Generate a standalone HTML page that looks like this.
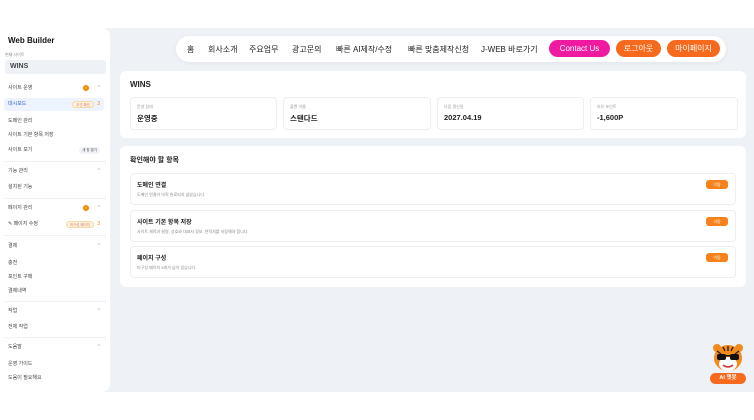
<!DOCTYPE html><html><head><meta charset="utf-8"><style>
*{box-sizing:border-box;margin:0;padding:0}
body{width:754px;height:420px;background:#fff;font-family:"Liberation Sans","Noto Sans CJK KR",sans-serif;position:relative;overflow:hidden;color:#222}
.bg{position:absolute;left:0;top:28px;width:754px;height:364px;background:#eef1f6}
.side{position:absolute;left:0;top:28px;width:110px;height:364px;background:#fff;border-radius:0 8px 8px 0;overflow:hidden;font-size:5px;color:#444}
.side .t{position:absolute;left:8px;top:8px;font-size:8px;font-weight:bold;color:#111}
.row{position:absolute;left:8px;right:6px;height:10px;line-height:10px}
.pill{position:absolute;right:10px;top:2px;height:7px;line-height:7px;padding:0 3px;border-radius:4px;font-size:3.5px}
.sep{position:absolute;left:4px;right:4px;height:1px;background:#f0f2f5}
.dot{position:absolute;right:15px;top:2px;width:6px;height:6px;border-radius:50%;background:#f08a00;color:#fff;font-size:4px;text-align:center;line-height:6px;font-weight:bold}
.car{position:absolute;right:4px;top:0;color:#aaa}
.nav{position:absolute;left:176px;top:36px;width:550px;height:26px;background:#fff;border-radius:13px;box-shadow:0 1px 4px rgba(0,0,0,.06);font-size:8px;color:#222}
.nav span{position:absolute;top:8px}
.btn{position:absolute;top:4px;height:17px;border-radius:9px;color:#fff;font-size:8px;text-align:center;line-height:17px}
.card{position:absolute;background:#fff;border-radius:6px}
.box{position:absolute;border:1px solid #eceef2;border-radius:4px;background:#fff}
.lab{font-size:4px;color:#999;position:absolute;left:6px;top:6px}
.val{font-size:7.5px;font-weight:bold;position:absolute;left:6px;top:15px;color:#222}
.it .h{position:absolute;left:6px;top:6px;font-size:6px;font-weight:bold}
.it .d{position:absolute;left:6px;top:18px;font-size:4px;color:#888}
.ob{position:absolute;right:7px;top:6px;width:22px;height:9px;border-radius:3px;background:#f7821b;color:#fff;font-size:4px;text-align:center;line-height:9px}
</style></head><body>
<div class="bg"></div>
<div class="side">
<div class="t">Web Builder</div>
<div style="position:absolute;left:5px;top:24px;font-size:4px;color:#888">현재 사이트</div>
<div style="position:absolute;left:5px;top:32px;width:101px;height:14px;background:#eef1f6;border-radius:3px;font-size:7px;font-weight:bold;line-height:14px;padding-left:5px">WINS</div>
<div class="row" style="top:55px">사이트 운영<div class="dot">!</div><span class="car">^</span></div>
<div class="row" style="top:70px;left:4px;padding-left:4px;background:#eef4ff;color:#2a5bd7;border-radius:3px;height:13px;line-height:13px">대시보드<div class="pill" style="top:3px;background:#fff3dc;color:#c77;border:1px solid #f5d9a8">우선 확인</div><span class="car" style="color:#f08a00">3</span></div>
<div class="row" style="top:88px">도메인 관리</div>
<div class="row" style="top:102px">사이트 기본 항목 저장</div>
<div class="row" style="top:117px">사이트 보기<div class="pill" style="background:#f0f2f5;color:#555;right:4px">새 창 열기</div></div>
<div class="sep" style="top:133px"></div>
<div class="row" style="top:138px">기능 관리<span class="car">^</span></div>
<div class="row" style="top:154px">설치된 기능</div>
<div class="sep" style="top:170px"></div>
<div class="row" style="top:175px">페이지 관리<div class="dot">!</div><span class="car">^</span></div>
<div class="row" style="top:191px">✎ 페이지 수정<div class="pill" style="background:#fff3dc;color:#c77;border:1px solid #f5d9a8">미구성 페이지</div><span class="car" style="color:#f08a00">3</span></div>
<div class="sep" style="top:207px"></div>
<div class="row" style="top:213px">결제<span class="car">^</span></div>
<div class="row" style="top:230px">충전</div>
<div class="row" style="top:244px">포인트 구매</div>
<div class="row" style="top:258px">결제내역</div>
<div class="sep" style="top:273px"></div>
<div class="row" style="top:278px">작업<span class="car">^</span></div>
<div class="row" style="top:294px">전체 작업</div>
<div class="sep" style="top:309px"></div>
<div class="row" style="top:314px">도움말<span class="car">^</span></div>
<div class="row" style="top:331px">운영 가이드</div>
<div class="row" style="top:345px">도움이 필요해요</div>
</div>
<div class="nav">
<span style="left:11px">홈</span><span style="left:32px">회사소개</span><span style="left:73px">주요업무</span><span style="left:116px">광고문의</span><span style="left:160px">빠른 AI제작/수정</span><span style="left:232px">빠른 맞춤제작신청</span><span style="left:305px">J-WEB 바로가기</span>
<div class="btn" style="left:373px;width:61px;background:#ef1aa0">Contact Us</div>
<div class="btn" style="left:440px;width:45px;background:#f7691c">로그아웃</div>
<div class="btn" style="left:491px;width:53px;background:#f7691c">마이페이지</div>
</div>
<div class="card" style="left:120px;top:71px;width:626px;height:67px">
<div style="position:absolute;left:10px;top:9px;font-size:8px;font-weight:bold">WINS</div>
<div class="box" style="left:10px;top:26px;width:147px;height:33px"><div class="lab">운영 상태</div><div class="val">운영중</div></div>
<div class="box" style="left:163px;top:26px;width:148px;height:33px"><div class="lab">플랜 이름</div><div class="val">스탠다드</div></div>
<div class="box" style="left:317px;top:26px;width:147px;height:33px"><div class="lab">다음 갱신일</div><div class="val">2027.04.19</div></div>
<div class="box" style="left:470px;top:26px;width:148px;height:33px"><div class="lab">보유 포인트</div><div class="val">-1,600P</div></div>
</div>
<div class="card" style="left:120px;top:146px;width:626px;height:141px">
<div style="position:absolute;left:10px;top:9px;font-size:7px;font-weight:bold">확인해야 할 항목</div>
<div class="box it" style="left:10px;top:27px;width:606px;height:32px"><div class="h">도메인 연결</div><div class="d">도메인 연결이 아직 완료되지 않았습니다.</div><div class="ob">이동</div></div>
<div class="box it" style="left:10px;top:64px;width:606px;height:32px"><div class="h">사이트 기본 항목 저장</div><div class="d">사이트 제목과 설명, 상호와 대표자 정보, 연락처를 저장해야 합니다.</div><div class="ob">이동</div></div>
<div class="box it" style="left:10px;top:100px;width:606px;height:32px"><div class="h">페이지 구성</div><div class="d">미구성 페이지 3개가 남아 있습니다.</div><div class="ob">이동</div></div>
</div>
<svg style="position:absolute;left:711px;top:343px" width="34" height="30" viewBox="0 0 34 30"><circle cx="6" cy="5" r="4" fill="#f28a1e"/><circle cx="28" cy="5" r="4" fill="#f28a1e"/><ellipse cx="17" cy="15" rx="14" ry="13" fill="#f28a1e"/><ellipse cx="17" cy="21" rx="9" ry="7" fill="#fff"/><path d="M6 8l4 3M28 8l-4 3M17 3v5M12 4l2 4M22 4l-2 4" stroke="#222" stroke-width="1.3"/><rect x="6" y="11" width="9" height="6" rx="2" fill="#111"/><rect x="19" y="11" width="9" height="6" rx="2" fill="#111"/><rect x="14" y="12" width="6" height="1.5" fill="#111"/><path d="M12 22q5 4 10 0" stroke="#c33" stroke-width="1.5" fill="none"/></svg>
<div style="position:absolute;left:710px;top:373px;width:36px;height:11px;border-radius:6px;background:#f7691c;color:#fff;font-size:5.5px;font-weight:bold;text-align:center;line-height:11px">AI 챗봇</div>
</body></html>
